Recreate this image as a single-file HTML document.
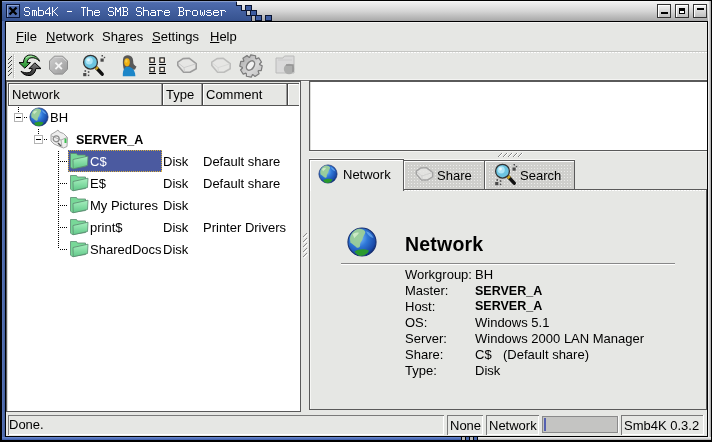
<!DOCTYPE html>
<html><head><meta charset="utf-8">
<style>
*{margin:0;padding:0;box-sizing:border-box}
html,body{width:712px;height:442px;overflow:hidden;background:#000}
body{position:relative;font-family:"Liberation Sans",sans-serif;font-size:13px;color:#000}
.a{position:absolute}
.t{position:absolute;white-space:nowrap;line-height:13px;-webkit-font-smoothing:antialiased;will-change:transform}
.b{font-weight:bold}
.u{text-decoration:underline;text-underline-offset:1px;text-decoration-thickness:1px}
svg{position:absolute;overflow:visible}
.ce{shape-rendering:crispEdges}
</style></head><body>
<!-- ============ WINDOW FRAME + TITLE ============ -->
<svg class="ce" style="left:0;top:0" width="712" height="442">
  <defs>
    <linearGradient id="gb" x1="0" y1="0" x2="0" y2="1"><stop offset="0" stop-color="#6480c0"/><stop offset="0.1" stop-color="#4d6bad"/><stop offset="1" stop-color="#36528f"/></linearGradient>
    <linearGradient id="gg" x1="0" y1="0" x2="0" y2="1"><stop offset="0" stop-color="#f4f4f4"/><stop offset="0.5" stop-color="#d6d6d6"/><stop offset="1" stop-color="#a8a8a8"/></linearGradient>
    <linearGradient id="fb" x1="0" y1="0" x2="1" y2="0"><stop offset="0" stop-color="#5b77b8"/><stop offset="1" stop-color="#3e5a9a"/></linearGradient>
    <linearGradient id="fg" x1="0" y1="0" x2="1" y2="0"><stop offset="0" stop-color="#fafafa"/><stop offset="1" stop-color="#a0a0a0"/></linearGradient>
    <pattern id="dotw" width="3" height="2" patternUnits="userSpaceOnUse"><rect width="2" height="1" fill="#fff"/></pattern>
    <pattern id="dotl" width="3" height="3" patternUnits="userSpaceOnUse"><rect width="1" height="1" fill="#ececea"/></pattern>
  </defs>
  <rect x="2" y="1" width="707" height="20" fill="url(#gg)"/>
  <rect x="708" y="1" width="3" height="439" fill="url(#fg)"/>
  <rect x="2" y="1" width="3" height="439" fill="url(#fb)"/>
  <rect x="2" y="437" width="709" height="3" fill="url(#gg)"/>
  <linearGradient id="bb" x1="0" y1="0" x2="0" y2="1"><stop offset="0" stop-color="#6c8ad0"/><stop offset="1" stop-color="#3a5aa6"/></linearGradient><rect x="2" y="437" width="459" height="3" fill="url(#bb)"/>
  <rect x="461" y="437" width="17" height="3" fill="#000"/>
  <rect x="462" y="437" width="3" height="3" fill="#b8b8b8"/>
  <rect x="466" y="437" width="3" height="3" fill="#4a66a8"/>
  <rect x="470" y="437" width="3" height="3" fill="#b8b8b8"/>
  <rect x="474" y="437" width="3" height="3" fill="#4a66a8"/>
  <rect x="5" y="21" width="703" height="416" fill="#000"/>
  <!-- content bg -->
  <rect x="6" y="22" width="701" height="414" fill="#e6e7e4"/>
  <rect x="6" y="22" width="701" height="1" fill="#f6f6f4"/>
  <!-- title blue staircase -->
  <path d="M2 1H237V5H242V10H247V15H252V21H2Z" fill="url(#gb)"/>
  <path d="M236 1V5H241V10H246V15H251V21" fill="none" stroke="#0a1430" stroke-width="1" transform="translate(0.5,0.5)"/>
  <g fill="#3e5ca0" stroke="#0a1430" stroke-width="1">
    <rect x="245.5" y="5.5" width="6" height="5"/>
    <rect x="250.5" y="10.5" width="6" height="5"/>
    <rect x="255.5" y="15.5" width="6" height="5"/>
    <rect x="265.5" y="15.5" width="6" height="5"/>
  </g>
  <rect x="2" y="1" width="706" height="1" fill="#ffffff" opacity="0.25"/>
  <!-- close button -->
  <rect x="6.5" y="4.5" width="13" height="13" fill="#4d6aab" stroke="#0c1636"/>
  <rect x="7" y="5" width="12" height="1" fill="#8fa6d8"/><rect x="7" y="5" width="1" height="12" fill="#8fa6d8"/>
  <path d="M9.5 7.5L16.5 14.5M16.5 7.5L9.5 14.5" stroke="#000" stroke-width="2.4" shape-rendering="auto"/>
  <!-- title buttons -->
  <linearGradient id="btn" x1="0" y1="0" x2="0" y2="1"><stop offset="0" stop-color="#f6f6f6"/><stop offset="1" stop-color="#bcbcbc"/></linearGradient>
  <g>
    <rect x="657.5" y="4.5" width="13" height="13" fill="url(#btn)" stroke="#333"/>
    <rect x="658" y="5" width="12" height="1" fill="#fff"/><rect x="658" y="5" width="1" height="12" fill="#fff"/>
    <rect x="661" y="12" width="7" height="2" fill="#000"/>
    <rect x="675.5" y="4.5" width="13" height="13" fill="url(#btn)" stroke="#333"/>
    <rect x="676" y="5" width="12" height="1" fill="#fff"/><rect x="676" y="5" width="1" height="12" fill="#fff"/>
    <rect x="679" y="8" width="6" height="6" fill="#000"/><rect x="680" y="11" width="4" height="2" fill="#fff"/>
    <rect x="693.5" y="4.5" width="13" height="13" fill="url(#btn)" stroke="#333"/>
    <rect x="694" y="5" width="12" height="1" fill="#fff"/><rect x="694" y="5" width="1" height="12" fill="#fff"/>
    <rect x="697" y="8" width="7" height="2" fill="#000"/>
  </g>

  <!-- menubar bottom -->
  <rect x="6" y="51" width="701" height="1" fill="#c4c5c2"/>
  <rect x="6" y="52" width="701" height="1" fill="url(#dotw)"/>
  <!-- toolbar handle -->
  <g fill="#3a3a3a"><rect x="8" y="59" width="1" height="1"/><rect x="9" y="58" width="1" height="1"/><rect x="10" y="57" width="1" height="1"/><rect x="11" y="56" width="1" height="1"/><rect x="8" y="63" width="1" height="1"/><rect x="9" y="62" width="1" height="1"/><rect x="10" y="61" width="1" height="1"/><rect x="11" y="60" width="1" height="1"/><rect x="8" y="67" width="1" height="1"/><rect x="9" y="66" width="1" height="1"/><rect x="10" y="65" width="1" height="1"/><rect x="11" y="64" width="1" height="1"/><rect x="8" y="71" width="1" height="1"/><rect x="9" y="70" width="1" height="1"/><rect x="10" y="69" width="1" height="1"/><rect x="11" y="68" width="1" height="1"/><rect x="8" y="75" width="1" height="1"/><rect x="9" y="74" width="1" height="1"/><rect x="10" y="73" width="1" height="1"/><rect x="11" y="72" width="1" height="1"/></g>
  <rect x="13" y="54" width="1" height="24" fill="#c0c0bd"/>
  <g fill="#fff"><rect x="14" y="55" width="1" height="1"/><rect x="14" y="57" width="1" height="1"/><rect x="14" y="59" width="1" height="1"/><rect x="14" y="61" width="1" height="1"/><rect x="14" y="63" width="1" height="1"/><rect x="14" y="65" width="1" height="1"/><rect x="14" y="67" width="1" height="1"/><rect x="14" y="69" width="1" height="1"/><rect x="14" y="71" width="1" height="1"/><rect x="14" y="73" width="1" height="1"/><rect x="14" y="75" width="1" height="1"/><rect x="14" y="77" width="1" height="1"/></g>
  <!-- toolbar bottom -->
  <rect x="6" y="79" width="701" height="1" fill="#f4f4f2"/>
  <rect x="6" y="80" width="701" height="2" fill="#6a6a6a"/>

  <!-- listview frame -->
  <rect x="6" y="80" width="295" height="332" fill="#5a5a5a"/>
  <rect x="7" y="82" width="293" height="329" fill="#fff"/>
  <rect x="7" y="82" width="1" height="329" fill="#d6d6d4"/>
  <!-- header -->
  <rect x="7" y="82" width="293" height="24" fill="#e6e7e4"/>
  <rect x="8" y="83" width="291" height="1" fill="#555"/>
  <rect x="8" y="83" width="1" height="23" fill="#555"/>
  <rect x="8" y="105" width="291" height="1" fill="#555"/>
  <rect x="9" y="84" width="289" height="1" fill="#fff"/><rect x="9" y="84" width="1" height="21" fill="#fff"/><rect x="11" y="86" width="150" height="1" fill="url(#dotl)"/><rect x="165" y="86" width="36" height="1" fill="url(#dotl)"/><rect x="205" y="86" width="81" height="1" fill="url(#dotl)"/>
  <rect x="161" y="84" width="1" height="21" fill="#9a9a9a"/><rect x="162" y="84" width="1" height="21" fill="#444"/>
  <rect x="163" y="84" width="1" height="21" fill="#fff"/>
  <rect x="201" y="84" width="1" height="21" fill="#9a9a9a"/><rect x="202" y="84" width="1" height="21" fill="#444"/>
  <rect x="203" y="84" width="1" height="21" fill="#fff"/>
  <rect x="286" y="84" width="1" height="21" fill="#9a9a9a"/><rect x="287" y="84" width="1" height="21" fill="#444"/>
  <rect x="288" y="84" width="1" height="21" fill="#fff"/>
  
  <rect x="299" y="82" width="1" height="24" fill="#fff"/>

  <!-- selection -->
  <rect x="68" y="150" width="94" height="22" fill="#4b5aa0"/>
  <rect x="68.5" y="150.5" width="93" height="21" fill="none" stroke="#d8b040" stroke-width="1" stroke-dasharray="1 1"/>
  <!-- splitter -->
  <rect x="301" y="82" width="8" height="329" fill="#e6e7e4"/>
  <rect x="301" y="81" width="8" height="1" fill="#f4f4f2"/>

  <!-- right top text box -->
  <rect x="309" y="80" width="398" height="71" fill="#5a5a5a"/>
  <rect x="310" y="82" width="397" height="68" fill="#fff"/>
  <rect x="310" y="82" width="1" height="68" fill="#dcdcda"/>
  <rect x="309" y="151" width="398" height="1" fill="#f4f4f2"/>
  <!-- vertical splitter grip -->
  <g fill="#fff"><rect x="304" y="237" width="1" height="1"/><rect x="305" y="236" width="1" height="1"/><rect x="306" y="235" width="1" height="1"/><rect x="307" y="234" width="1" height="1"/><rect x="304" y="242" width="1" height="1"/><rect x="305" y="241" width="1" height="1"/><rect x="306" y="240" width="1" height="1"/><rect x="307" y="239" width="1" height="1"/><rect x="304" y="247" width="1" height="1"/><rect x="305" y="246" width="1" height="1"/><rect x="306" y="245" width="1" height="1"/><rect x="307" y="244" width="1" height="1"/><rect x="304" y="252" width="1" height="1"/><rect x="305" y="251" width="1" height="1"/><rect x="306" y="250" width="1" height="1"/><rect x="307" y="249" width="1" height="1"/><rect x="304" y="257" width="1" height="1"/><rect x="305" y="256" width="1" height="1"/><rect x="306" y="255" width="1" height="1"/><rect x="307" y="254" width="1" height="1"/></g><g fill="#8a8a8a"><rect x="303" y="236" width="1" height="1"/><rect x="304" y="235" width="1" height="1"/><rect x="305" y="234" width="1" height="1"/><rect x="306" y="233" width="1" height="1"/><rect x="303" y="241" width="1" height="1"/><rect x="304" y="240" width="1" height="1"/><rect x="305" y="239" width="1" height="1"/><rect x="306" y="238" width="1" height="1"/><rect x="303" y="246" width="1" height="1"/><rect x="304" y="245" width="1" height="1"/><rect x="305" y="244" width="1" height="1"/><rect x="306" y="243" width="1" height="1"/><rect x="303" y="251" width="1" height="1"/><rect x="304" y="250" width="1" height="1"/><rect x="305" y="249" width="1" height="1"/><rect x="306" y="248" width="1" height="1"/><rect x="303" y="256" width="1" height="1"/><rect x="304" y="255" width="1" height="1"/><rect x="305" y="254" width="1" height="1"/><rect x="306" y="253" width="1" height="1"/></g>
  <!-- horizontal splitter grip -->
  <g fill="#fff"><rect x="499" y="156" width="1" height="1"/><rect x="500" y="155" width="1" height="1"/><rect x="501" y="154" width="1" height="1"/><rect x="502" y="153" width="1" height="1"/><rect x="504" y="156" width="1" height="1"/><rect x="505" y="155" width="1" height="1"/><rect x="506" y="154" width="1" height="1"/><rect x="507" y="153" width="1" height="1"/><rect x="509" y="156" width="1" height="1"/><rect x="510" y="155" width="1" height="1"/><rect x="511" y="154" width="1" height="1"/><rect x="512" y="153" width="1" height="1"/><rect x="514" y="156" width="1" height="1"/><rect x="515" y="155" width="1" height="1"/><rect x="516" y="154" width="1" height="1"/><rect x="517" y="153" width="1" height="1"/><rect x="519" y="156" width="1" height="1"/><rect x="520" y="155" width="1" height="1"/><rect x="521" y="154" width="1" height="1"/><rect x="522" y="153" width="1" height="1"/></g><g fill="#808080"><rect x="498" y="156" width="1" height="1"/><rect x="499" y="155" width="1" height="1"/><rect x="500" y="154" width="1" height="1"/><rect x="501" y="153" width="1" height="1"/><rect x="503" y="156" width="1" height="1"/><rect x="504" y="155" width="1" height="1"/><rect x="505" y="154" width="1" height="1"/><rect x="506" y="153" width="1" height="1"/><rect x="508" y="156" width="1" height="1"/><rect x="509" y="155" width="1" height="1"/><rect x="510" y="154" width="1" height="1"/><rect x="511" y="153" width="1" height="1"/><rect x="513" y="156" width="1" height="1"/><rect x="514" y="155" width="1" height="1"/><rect x="515" y="154" width="1" height="1"/><rect x="516" y="153" width="1" height="1"/><rect x="518" y="156" width="1" height="1"/><rect x="519" y="155" width="1" height="1"/><rect x="520" y="154" width="1" height="1"/><rect x="521" y="153" width="1" height="1"/></g>
  <!-- tab widget panel -->
  <rect x="309" y="189" width="398" height="221" fill="#5a5a5a"/>
  <rect x="310" y="190" width="396" height="219" fill="#e6e7e4"/>
  <rect x="404" y="190" width="302" height="1" fill="url(#dotw)"/>
  <rect x="310" y="190" width="1" height="219" fill="#f6f6f4"/>
  <!-- inactive tabs -->
  <rect x="404" y="159" width="171" height="1" fill="#f6f6f4"/>
  <rect x="403" y="160" width="82" height="30" fill="#5a5a5a"/>
  <rect x="404" y="161" width="80" height="28" fill="#cfcfcc"/>
  <rect x="484" y="160" width="91" height="30" fill="#5a5a5a"/>
  <rect x="485" y="161" width="89" height="28" fill="#cfcfcc"/>
  <rect x="404" y="161" width="80" height="1" fill="#fff"/>
  <rect x="485" y="161" width="89" height="1" fill="#fff"/>
  <rect x="404" y="161" width="1" height="28" fill="#fff"/>
  <rect x="485" y="161" width="1" height="28" fill="#fff"/>
  <rect x="406" y="164" width="77" height="24" fill="url(#dotl)"/>
  <rect x="487" y="164" width="86" height="24" fill="url(#dotl)"/>
  <!-- active tab -->
  <rect x="309" y="158" width="95" height="1" fill="#f6f6f4"/>
  <rect x="309" y="159" width="95" height="32" fill="#5a5a5a"/>
  <rect x="310" y="160" width="93" height="31" fill="#e6e7e4"/>
  <rect x="310" y="160" width="93" height="1" fill="#fff"/>
  <rect x="310" y="160" width="1" height="31" fill="#fff"/>

  <!-- status bar -->
  <rect x="8" y="415" width="436" height="20" fill="#7a7a7a"/>
  <rect x="9" y="416" width="435" height="19" fill="#fff"/>
  <rect x="9" y="416" width="434" height="18" fill="#e6e7e4"/>
  <rect x="447" y="415" width="36" height="20" fill="#7a7a7a"/>
  <rect x="448" y="416" width="35" height="19" fill="#fff"/>
  <rect x="448" y="416" width="34" height="18" fill="#e6e7e4"/>
  <rect x="486" y="415" width="53" height="20" fill="#7a7a7a"/>
  <rect x="487" y="416" width="52" height="19" fill="#fff"/>
  <rect x="487" y="416" width="51" height="18" fill="#e6e7e4"/>
  <rect x="542" y="416" width="76" height="17" fill="#8a8a8a"/>
  <rect x="543" y="417" width="74" height="15" fill="#c4c4c2"/>
  <rect x="618" y="416" width="1" height="17" fill="#fafafa"/>
  <rect x="544" y="418" width="2" height="13" fill="#5560b0"/>
  <rect x="621" y="415" width="82" height="20" fill="#7a7a7a"/>
  <rect x="622" y="416" width="82" height="19" fill="#fff"/><rect x="703" y="415" width="1" height="1" fill="#fff"/>
  <rect x="622" y="416" width="81" height="18" fill="#e6e7e4"/>
</svg>

<!-- ============ ICONS ============ -->
<svg width="0" height="0" style="left:0;top:0">
  <defs>
    <radialGradient id="globeG" cx="0.38" cy="0.35" r="0.7">
      <stop offset="0" stop-color="#8cc8ff"/><stop offset="0.45" stop-color="#2f78d8"/><stop offset="0.85" stop-color="#1a4aa8"/><stop offset="1" stop-color="#0c2a70"/>
    </radialGradient>
    <linearGradient id="fold" x1="0" y1="0" x2="0" y2="1"><stop offset="0" stop-color="#a8f0c0"/><stop offset="1" stop-color="#60c888"/></linearGradient>
    <symbol id="globe" viewBox="0 0 22 22">
      <circle cx="11" cy="11" r="9.1" fill="url(#globeG)" stroke="#183070" stroke-width="0.7"/>
      <path d="M3.2 9C3.5 6 5.5 3.5 8.5 2.5C10.5 2.3 12.5 3 13.2 4.5C12.8 6.5 11.5 7.5 11.2 9.5C10.5 11 9.5 11.5 9.8 13.5C9.5 15 8 15.2 7 14C5.5 13 4.8 12 3.5 11.5Z" fill="#9ccf98" opacity="0.95"/>
      <path d="M5 6C6 5 7.5 4.5 9 5C8.5 6.5 7 7 6 8.5Z" fill="#d8f0d0" opacity="0.8"/>
      <path d="M6.2 17.2C8.5 15.5 12.5 15.2 15.5 16.5C15 18.5 12.5 20 10 20C8.5 19.8 7 19 6.2 17.2Z" fill="#2a9a2e"/>
      <path d="M13.5 4C15.5 4.5 17.5 6 18.5 8.5C17 8 15 7 13.5 4Z" fill="#7fc0ff" opacity="0.6"/>
    </symbol>
    <symbol id="folder" viewBox="0 0 24 22">
      <path d="M4.5 3.5H10.5L11.5 5H19.5V16.5L6 18.5L4.5 17Z" fill="#78d898" stroke="#5a8a70" stroke-width="0.8"/>
      <path d="M7 9.5L22 6.2L21.5 15.5L7.2 18.8Z" fill="url(#fold)" stroke="#5a8a70" stroke-width="0.8"/>
    </symbol>
    <symbol id="drive" viewBox="0 0 26 26">
      <path d="M3.8 9.2L9 5.6L15 5.2L22.2 10.6L22.2 15.8L16 19.3L9.6 19.3L3.8 12.6Z" fill="#e6e6e4" stroke="#9c9c9c" stroke-width="1.6" stroke-linejoin="round"/>
      <path d="M4.5 10.2L10 14.6L21.5 11M10 14.6L10.4 18.6" fill="none" stroke="#cacaca" stroke-width="0.9"/>
    </symbol>
    <symbol id="search" viewBox="0 0 26 26">
      <path d="M16.5 15L22.2 21.2" stroke="#111" stroke-width="3.4" stroke-linecap="round"/>
      <path d="M15.8 14.2L17.6 16.2" stroke="#c8a020" stroke-width="3.4"/>
      <circle cx="10.5" cy="9.2" r="6.9" fill="#6cc4e0" stroke="#333" stroke-width="1.3"/>
      <circle cx="9.2" cy="7.8" r="3.6" fill="#b8ecfa" opacity="0.85"/>
      <circle cx="8.5" cy="7" r="1.4" fill="#fff" opacity="0.7"/>
      <g fill="#4a4a4a"><rect x="20.5" y="5.5" width="3.2" height="3.2"/><rect x="21.5" y="2" width="1.5" height="1.5"/><rect x="23.8" y="3.8" width="1.4" height="1.4"/>
      <rect x="3.2" y="20" width="3.2" height="3.2"/><rect x="4.5" y="17.2" width="1.6" height="1.6"/><rect x="7.8" y="18.2" width="1.6" height="1.6"/><rect x="7.8" y="21.6" width="1.5" height="1.5"/></g>
    </symbol>
  </defs>
</svg>
<!-- toolbar icons -->
<svg style="left:17px;top:53px" width="26" height="26" viewBox="0 0 26 26">
  <linearGradient id="rg" x1="0" y1="0" x2="0" y2="1"><stop offset="0" stop-color="#7cd87c"/><stop offset="1" stop-color="#1f8a2a"/></linearGradient>
  <linearGradient id="rk" x1="0" y1="0" x2="0" y2="1"><stop offset="0" stop-color="#808080"/><stop offset="1" stop-color="#2a2a2a"/></linearGradient>
  <g stroke="#000" stroke-width="1" stroke-linejoin="round">
    <path d="M22.5 8.2C21 3.5 16 1.5 11.5 2.2C8.5 2.8 6.6 5.8 6.4 9.6H2L7.8 15.2L13.5 9.6H10C10.2 7.2 11.5 5.3 14 4.8C17 4.3 20.2 5.6 22.5 8.2Z" fill="url(#rg)"/>
    <path d="M4 18.2C6 21.5 9.5 23 13 22.5C16.5 22 18.5 19 18.8 15.6H24L17.8 9.8L12 15.6H15.2C15 17.8 13.5 19.6 11 19.8C8.5 20 6 19.5 4 18.2Z" fill="url(#rk)"/>
  </g>
  <path d="M9 5C10.5 3.5 13 3 15.5 3.2" fill="none" stroke="#c8f0c8" stroke-width="0.8"/>
</svg>
<svg style="left:46px;top:53px" width="26" height="26" viewBox="0 0 26 26">
  <linearGradient id="sg" x1="0" y1="0" x2="1" y2="1"><stop offset="0" stop-color="#cfcfcf"/><stop offset="1" stop-color="#9a9a9a"/></linearGradient>
  <path d="M8.3 3.2H16.7L21.5 8V16.3L16.7 21.1H8.3L3.5 16.3V8Z" fill="url(#sg)" stroke="#8c8c8c" stroke-width="1"/>
  <path d="M8.8 4.3H16.2L20.4 8.5" fill="none" stroke="#e0e0e0" stroke-width="0.8"/>
  <path d="M9.4 9.6L15.9 16.2M15.9 9.6L9.4 16.2" stroke="#f4f4f4" stroke-width="1.9"/>
</svg>
<svg style="left:80px;top:53px" width="26" height="26"><use href="#search" width="26" height="26"/></svg>
<svg style="left:116px;top:53px" width="26" height="26" viewBox="0 0 26 26">
  <path d="M7 6.5C7.2 3.5 9.5 2.2 12 2.3C15 2.5 17 4.5 17.2 8C17.3 10.5 17.5 12 20.5 13.5L19 16.5L15 17H8C7 13.5 6.6 10 7 6.5Z" fill="#585858"/>
  <ellipse cx="11" cy="9.3" rx="2.8" ry="4.1" fill="#f0b010"/>
  <ellipse cx="10.4" cy="8" rx="1.2" ry="1.8" fill="#f8d860" opacity="0.7"/>
  <path d="M6.8 23.2C6.6 19.5 7.2 16 9.5 14.2C11 13.6 13 13.6 14.5 14.2C17.5 15.5 19.2 18.5 19.4 23.2Z" fill="#1c86c8"/>
</svg>
<svg style="left:145px;top:53px" width="26" height="26" viewBox="0 0 26 26">
  <g fill="#fff6ea" stroke="#151515" stroke-width="1.1">
    <rect x="4.9" y="4.9" width="4.4" height="4.4"/><rect x="14.9" y="4.9" width="4.4" height="4.4"/>
    <rect x="4.9" y="14.3" width="4.4" height="4.4"/><rect x="14.9" y="14.3" width="4.4" height="4.4"/>
  </g>
  <g fill="#000" class="ce" shape-rendering="crispEdges"><rect x="4" y="11" width="7" height="1"/><rect x="14" y="11" width="7" height="1"/><rect x="4" y="20" width="7" height="1"/><rect x="14" y="20" width="7" height="1"/></g>
</svg>
<svg style="left:174px;top:53px" width="26" height="26"><use href="#drive" width="26" height="26"/></svg>
<svg style="left:208px;top:53px;opacity:0.55" width="26" height="26"><use href="#drive" width="26" height="26"/></svg>
<svg style="left:238px;top:53px" width="26" height="26" viewBox="0 0 26 26">
  <linearGradient id="gear" x1="0" y1="0" x2="1" y2="1"><stop offset="0" stop-color="#a8a8a8"/><stop offset="0.6" stop-color="#d8d8d8"/><stop offset="1" stop-color="#bcbcbc"/></linearGradient>
  <path d="M11.60 4.31 L12.78 1.80 L17.57 2.77 L17.67 5.54 L18.15 5.87 L20.76 4.92 L23.46 9.00 L21.58 11.03 L21.69 11.60 L24.20 12.78 L23.23 17.57 L20.46 17.67 L20.13 18.15 L21.08 20.76 L17.00 23.46 L14.97 21.58 L14.40 21.69 L13.22 24.20 L8.43 23.23 L8.33 20.46 L7.85 20.13 L5.24 21.08 L2.54 17.00 L4.42 14.97 L4.31 14.40 L1.80 13.22 L2.77 8.43 L5.54 8.33 L5.87 7.85 L4.92 5.24 L9.00 2.54 L11.03 4.42Z" fill="url(#gear)" stroke="#7c7c7c" stroke-width="1.2" stroke-linejoin="round"/>
  <ellipse cx="12.5" cy="12.5" rx="3.4" ry="5.2" transform="rotate(35 12.5 12.5)" fill="#f2f2f2" stroke="#808080" stroke-width="1.5"/>
</svg>
<svg style="left:273px;top:53px;opacity:0.8" width="26" height="26" viewBox="0 0 26 26">
  <path d="M3 5H10L11.5 3H21V20H3Z" fill="#d8d8d8" stroke="#b0b0b0" stroke-width="1"/>
  <path d="M5 7H19" stroke="#c4c4c4"/>
  <circle cx="16" cy="16" r="5.2" fill="#a0a0a0"/>
  <path d="M13 12L20 12L20 19" fill="none" stroke="#808080" stroke-width="1.5"/>
</svg>
<!-- tree icons -->
<svg style="left:28px;top:106px" width="22" height="22"><use href="#globe" width="22" height="22"/></svg>
<svg style="left:48px;top:128px" width="22" height="22" viewBox="0 0 22 22">
  <path d="M3 6.5L8 3.5L10 2L11.5 4L15.5 5.5L19.5 9.5L19 18.5L15.5 20L6 16L3 13Z" fill="#eeeeee" stroke="#9a9a9a" stroke-width="0.9"/>
  <path d="M3.5 8L13 12L19 9.5M13 12L14 19.5" fill="none" stroke="#a8a8a8" stroke-width="0.9"/>
  <circle cx="8.2" cy="10.8" r="3" fill="none" stroke="#8a8a8a" stroke-width="1.2"/>
  <path d="M10 15L13 18" stroke="#555" stroke-width="1.4"/>
  <rect x="16.5" y="10.5" width="2" height="4.5" fill="#3cc050"/>
</svg>
<svg style="left:66px;top:150px" width="24" height="22"><use href="#folder" width="24" height="22"/></svg>
<svg style="left:66px;top:172px" width="24" height="22"><use href="#folder" width="24" height="22"/></svg>
<svg style="left:66px;top:194px" width="24" height="22"><use href="#folder" width="24" height="22"/></svg>
<svg style="left:66px;top:216px" width="24" height="22"><use href="#folder" width="24" height="22"/></svg>
<svg style="left:66px;top:238px" width="24" height="22"><use href="#folder" width="24" height="22"/></svg>
<!-- tab icons -->
<svg style="left:317px;top:163px" width="22" height="22"><use href="#globe" width="22" height="22"/></svg>
<svg style="left:413px;top:163px;opacity:0.85" width="23" height="23"><use href="#drive" width="23" height="23"/></svg>
<svg style="left:492px;top:162px" width="26" height="26"><use href="#search" width="26" height="26"/></svg>
<svg style="left:345px;top:225px" width="34" height="34"><use href="#globe" width="34" height="34"/></svg>
<!-- tree lines -->
<svg class="ce" style="left:0;top:0" width="712" height="442">
<g fill="#000"><rect x="18" y="107" width="1" height="1"/><rect x="18" y="109" width="1" height="1"/><rect x="18" y="111" width="1" height="1"/><rect x="24" y="117" width="1" height="1"/><rect x="26" y="117" width="1" height="1"/><rect x="38" y="129" width="1" height="1"/><rect x="38" y="131" width="1" height="1"/><rect x="38" y="133" width="1" height="1"/><rect x="44" y="139" width="1" height="1"/><rect x="46" y="139" width="1" height="1"/><rect x="58" y="151" width="1" height="1"/><rect x="58" y="153" width="1" height="1"/><rect x="58" y="155" width="1" height="1"/><rect x="58" y="157" width="1" height="1"/><rect x="58" y="159" width="1" height="1"/><rect x="58" y="161" width="1" height="1"/><rect x="58" y="163" width="1" height="1"/><rect x="58" y="165" width="1" height="1"/><rect x="58" y="167" width="1" height="1"/><rect x="58" y="169" width="1" height="1"/><rect x="58" y="171" width="1" height="1"/><rect x="58" y="173" width="1" height="1"/><rect x="58" y="175" width="1" height="1"/><rect x="58" y="177" width="1" height="1"/><rect x="58" y="179" width="1" height="1"/><rect x="58" y="181" width="1" height="1"/><rect x="58" y="183" width="1" height="1"/><rect x="58" y="185" width="1" height="1"/><rect x="58" y="187" width="1" height="1"/><rect x="58" y="189" width="1" height="1"/><rect x="58" y="191" width="1" height="1"/><rect x="58" y="193" width="1" height="1"/><rect x="58" y="195" width="1" height="1"/><rect x="58" y="197" width="1" height="1"/><rect x="58" y="199" width="1" height="1"/><rect x="58" y="201" width="1" height="1"/><rect x="58" y="203" width="1" height="1"/><rect x="58" y="205" width="1" height="1"/><rect x="58" y="207" width="1" height="1"/><rect x="58" y="209" width="1" height="1"/><rect x="58" y="211" width="1" height="1"/><rect x="58" y="213" width="1" height="1"/><rect x="58" y="215" width="1" height="1"/><rect x="58" y="217" width="1" height="1"/><rect x="58" y="219" width="1" height="1"/><rect x="58" y="221" width="1" height="1"/><rect x="58" y="223" width="1" height="1"/><rect x="58" y="225" width="1" height="1"/><rect x="58" y="227" width="1" height="1"/><rect x="58" y="229" width="1" height="1"/><rect x="58" y="231" width="1" height="1"/><rect x="58" y="233" width="1" height="1"/><rect x="58" y="235" width="1" height="1"/><rect x="58" y="237" width="1" height="1"/><rect x="58" y="239" width="1" height="1"/><rect x="58" y="241" width="1" height="1"/><rect x="58" y="243" width="1" height="1"/><rect x="58" y="245" width="1" height="1"/><rect x="58" y="247" width="1" height="1"/><rect x="60" y="161" width="1" height="1"/><rect x="62" y="161" width="1" height="1"/><rect x="64" y="161" width="1" height="1"/><rect x="66" y="161" width="1" height="1"/><rect x="60" y="183" width="1" height="1"/><rect x="62" y="183" width="1" height="1"/><rect x="64" y="183" width="1" height="1"/><rect x="66" y="183" width="1" height="1"/><rect x="60" y="205" width="1" height="1"/><rect x="62" y="205" width="1" height="1"/><rect x="64" y="205" width="1" height="1"/><rect x="66" y="205" width="1" height="1"/><rect x="60" y="227" width="1" height="1"/><rect x="62" y="227" width="1" height="1"/><rect x="64" y="227" width="1" height="1"/><rect x="66" y="227" width="1" height="1"/><rect x="60" y="249" width="1" height="1"/><rect x="62" y="249" width="1" height="1"/><rect x="64" y="249" width="1" height="1"/><rect x="66" y="249" width="1" height="1"/></g>
<rect x="14" y="113" width="9" height="9" fill="#b4b4b4"/><rect x="15" y="114" width="7" height="7" fill="#fff"/><rect x="16" y="117" width="5" height="1" fill="#000"/>
<rect x="34" y="135" width="9" height="9" fill="#b4b4b4"/><rect x="35" y="136" width="7" height="7" fill="#fff"/><rect x="36" y="139" width="5" height="1" fill="#000"/>
</svg>
<svg class="ce" style="left:0;top:0" width="240" height="22"><path fill="#fff" d="M25 7h4v1h-4zM24 8h1v1h-1zM29 8h1v1h-1zM24 9h1v1h-1zM24 10h1v1h-1zM25 11h4v1h-4zM29 12h1v1h-1zM29 13h1v1h-1zM24 14h1v1h-1zM29 14h1v1h-1zM25 15h4v1h-4zM32 10h4v1h-4zM32 11h1v1h-1zM34 11h1v1h-1zM36 11h1v1h-1zM32 12h1v1h-1zM34 12h1v1h-1zM36 12h1v1h-1zM32 13h1v1h-1zM34 13h1v1h-1zM36 13h1v1h-1zM32 14h1v1h-1zM34 14h1v1h-1zM36 14h1v1h-1zM32 15h1v1h-1zM34 15h1v1h-1zM36 15h1v1h-1zM38 7h1v1h-1zM38 8h1v1h-1zM38 9h1v1h-1zM38 10h5v1h-5zM38 11h1v1h-1zM43 11h1v1h-1zM38 12h1v1h-1zM43 12h1v1h-1zM38 13h1v1h-1zM43 13h1v1h-1zM38 14h1v1h-1zM43 14h1v1h-1zM38 15h5v1h-5zM49 7h1v1h-1zM48 8h2v1h-2zM47 9h1v1h-1zM49 9h1v1h-1zM46 10h1v1h-1zM49 10h1v1h-1zM45 11h1v1h-1zM49 11h1v1h-1zM45 12h1v1h-1zM49 12h1v1h-1zM45 13h6v1h-6zM49 14h1v1h-1zM49 15h1v1h-1zM52 7h1v1h-1zM57 7h1v1h-1zM52 8h1v1h-1zM56 8h1v1h-1zM52 9h1v1h-1zM55 9h1v1h-1zM52 10h1v1h-1zM54 10h1v1h-1zM52 11h2v1h-2zM52 12h1v1h-1zM54 12h1v1h-1zM52 13h1v1h-1zM55 13h1v1h-1zM52 14h1v1h-1zM56 14h1v1h-1zM52 15h1v1h-1zM57 15h1v1h-1zM67 11h5v1h-5zM81 7h5v1h-5zM83 8h1v1h-1zM83 9h1v1h-1zM83 10h1v1h-1zM83 11h1v1h-1zM83 12h1v1h-1zM83 13h1v1h-1zM83 14h1v1h-1zM83 15h1v1h-1zM87 7h1v1h-1zM87 8h1v1h-1zM87 9h1v1h-1zM87 10h5v1h-5zM87 11h1v1h-1zM92 11h1v1h-1zM87 12h1v1h-1zM92 12h1v1h-1zM87 13h1v1h-1zM92 13h1v1h-1zM87 14h1v1h-1zM92 14h1v1h-1zM87 15h1v1h-1zM92 15h1v1h-1zM95 10h4v1h-4zM94 11h1v1h-1zM99 11h1v1h-1zM94 12h6v1h-6zM94 13h1v1h-1zM94 14h1v1h-1zM99 14h1v1h-1zM95 15h4v1h-4zM109 7h4v1h-4zM108 8h1v1h-1zM113 8h1v1h-1zM108 9h1v1h-1zM108 10h1v1h-1zM109 11h4v1h-4zM113 12h1v1h-1zM113 13h1v1h-1zM108 14h1v1h-1zM113 14h1v1h-1zM109 15h4v1h-4zM115 7h1v1h-1zM120 7h1v1h-1zM115 8h2v1h-2zM119 8h2v1h-2zM115 9h2v1h-2zM119 9h2v1h-2zM115 10h1v1h-1zM117 10h2v1h-2zM120 10h1v1h-1zM115 11h1v1h-1zM117 11h2v1h-2zM120 11h1v1h-1zM115 12h1v1h-1zM120 12h1v1h-1zM115 13h1v1h-1zM120 13h1v1h-1zM115 14h1v1h-1zM120 14h1v1h-1zM115 15h1v1h-1zM120 15h1v1h-1zM122 7h5v1h-5zM123 8h1v1h-1zM127 8h1v1h-1zM123 9h1v1h-1zM127 9h1v1h-1zM123 10h1v1h-1zM127 10h1v1h-1zM123 11h4v1h-4zM123 12h1v1h-1zM127 12h1v1h-1zM123 13h1v1h-1zM127 13h1v1h-1zM123 14h1v1h-1zM127 14h1v1h-1zM122 15h5v1h-5zM137 7h4v1h-4zM136 8h1v1h-1zM141 8h1v1h-1zM136 9h1v1h-1zM136 10h1v1h-1zM137 11h4v1h-4zM141 12h1v1h-1zM141 13h1v1h-1zM136 14h1v1h-1zM141 14h1v1h-1zM137 15h4v1h-4zM143 7h1v1h-1zM143 8h1v1h-1zM143 9h1v1h-1zM143 10h5v1h-5zM143 11h1v1h-1zM148 11h1v1h-1zM143 12h1v1h-1zM148 12h1v1h-1zM143 13h1v1h-1zM148 13h1v1h-1zM143 14h1v1h-1zM148 14h1v1h-1zM143 15h1v1h-1zM148 15h1v1h-1zM151 10h4v1h-4zM155 11h1v1h-1zM151 12h5v1h-5zM150 13h1v1h-1zM155 13h1v1h-1zM150 14h1v1h-1zM155 14h1v1h-1zM151 15h5v1h-5zM157 10h5v1h-5zM158 11h1v1h-1zM162 11h1v1h-1zM158 12h1v1h-1zM158 13h1v1h-1zM158 14h1v1h-1zM158 15h1v1h-1zM165 10h4v1h-4zM164 11h1v1h-1zM169 11h1v1h-1zM164 12h6v1h-6zM164 13h1v1h-1zM164 14h1v1h-1zM169 14h1v1h-1zM165 15h4v1h-4zM178 7h5v1h-5zM179 8h1v1h-1zM183 8h1v1h-1zM179 9h1v1h-1zM183 9h1v1h-1zM179 10h1v1h-1zM183 10h1v1h-1zM179 11h4v1h-4zM179 12h1v1h-1zM183 12h1v1h-1zM179 13h1v1h-1zM183 13h1v1h-1zM179 14h1v1h-1zM183 14h1v1h-1zM178 15h5v1h-5zM185 10h5v1h-5zM186 11h1v1h-1zM190 11h1v1h-1zM186 12h1v1h-1zM186 13h1v1h-1zM186 14h1v1h-1zM186 15h1v1h-1zM193 10h4v1h-4zM192 11h1v1h-1zM197 11h1v1h-1zM192 12h1v1h-1zM197 12h1v1h-1zM192 13h1v1h-1zM197 13h1v1h-1zM192 14h1v1h-1zM197 14h1v1h-1zM193 15h4v1h-4zM200 10h1v1h-1zM204 10h1v1h-1zM200 11h1v1h-1zM204 11h1v1h-1zM200 12h1v1h-1zM202 12h1v1h-1zM204 12h1v1h-1zM200 13h1v1h-1zM202 13h1v1h-1zM204 13h1v1h-1zM200 14h1v1h-1zM202 14h1v1h-1zM204 14h1v1h-1zM201 15h1v1h-1zM203 15h1v1h-1zM207 10h4v1h-4zM206 11h1v1h-1zM207 12h4v1h-4zM211 13h1v1h-1zM206 14h1v1h-1zM211 14h1v1h-1zM207 15h4v1h-4zM214 10h4v1h-4zM213 11h1v1h-1zM218 11h1v1h-1zM213 12h6v1h-6zM213 13h1v1h-1zM213 14h1v1h-1zM218 14h1v1h-1zM214 15h4v1h-4zM220 10h5v1h-5zM221 11h1v1h-1zM225 11h1v1h-1zM221 12h1v1h-1zM221 13h1v1h-1zM221 14h1v1h-1zM221 15h1v1h-1z"/></svg>
<!-- menu -->
<div class="t" style="left:16px;top:30px"><span class="u">F</span>ile</div>
<div class="t" style="left:46px;top:30px"><span class="u">N</span>etwork</div>
<div class="t" style="left:102px;top:30px">Sh<span class="u">a</span>res</div>
<div class="t" style="left:152px;top:30px"><span class="u">S</span>ettings</div>
<div class="t" style="left:210px;top:30px"><span class="u">H</span>elp</div>

<!-- listview text -->
<div class="t" style="left:12px;top:88px">Network</div>
<div class="t" style="left:166px;top:88px">Type</div>
<div class="t" style="left:206px;top:88px">Comment</div>

<div class="t" style="left:50px;top:111px">BH</div>
<div class="t b" style="left:76px;top:134px;font-size:12.5px">SERVER_A</div>
<div class="t" style="left:90px;top:155px;color:#fff">C$</div>
<div class="t" style="left:90px;top:177px">E$</div>
<div class="t" style="left:90px;top:199px">My Pictures</div>
<div class="t" style="left:90px;top:221px">print$</div>
<div class="t" style="left:90px;top:243px">SharedDocs</div>
<div class="t" style="left:163px;top:155px">Disk</div>
<div class="t" style="left:163px;top:177px">Disk</div>
<div class="t" style="left:163px;top:199px">Disk</div>
<div class="t" style="left:163px;top:221px">Disk</div>
<div class="t" style="left:163px;top:243px">Disk</div>
<div class="t" style="left:203px;top:155px">Default share</div>
<div class="t" style="left:203px;top:177px">Default share</div>
<div class="t" style="left:203px;top:221px">Printer Drivers</div>

<!-- tabs text -->
<div class="t" style="left:343px;top:168px">Network</div>
<div class="t" style="left:437px;top:169px">Share</div>
<div class="t" style="left:520px;top:169px">Search</div>

<!-- info panel -->
<div class="t b" style="left:405px;top:235px;font-size:19.5px;line-height:19px;letter-spacing:0.2px">Network</div>
<div class="a" style="left:341px;top:263px;width:334px;height:1px;background:#888"></div>
<div class="a" style="left:341px;top:264px;width:334px;height:1px;background:#fff"></div>
<div class="t" style="left:405px;top:268px">Workgroup:</div>
<div class="t" style="left:405px;top:284px">Master:</div>
<div class="t" style="left:405px;top:300px">Host:</div>
<div class="t" style="left:405px;top:316px">OS:</div>
<div class="t" style="left:405px;top:332px">Server:</div>
<div class="t" style="left:405px;top:348px">Share:</div>
<div class="t" style="left:405px;top:364px">Type:</div>
<div class="t" style="left:475px;top:268px">BH</div>
<div class="t b" style="left:475px;top:285px;font-size:12.5px">SERVER_A</div>
<div class="t b" style="left:475px;top:300px;font-size:12.5px">SERVER_A</div>
<div class="t" style="left:475px;top:316px">Windows 5.1</div>
<div class="t" style="left:475px;top:332px">Windows 2000 LAN Manager</div>
<div class="t" style="left:475px;top:348px">C$</div>
<div class="t" style="left:503px;top:348px">(Default share)</div>
<div class="t" style="left:475px;top:364px">Disk</div>

<!-- status text -->
<div class="t" style="left:9px;top:418px">Done.</div>
<div class="t" style="left:450px;top:419px">None</div>
<div class="t" style="left:489px;top:419px">Network</div>
<div class="t" style="left:624px;top:419px">Smb4K 0.3.2</div>
</body></html>
